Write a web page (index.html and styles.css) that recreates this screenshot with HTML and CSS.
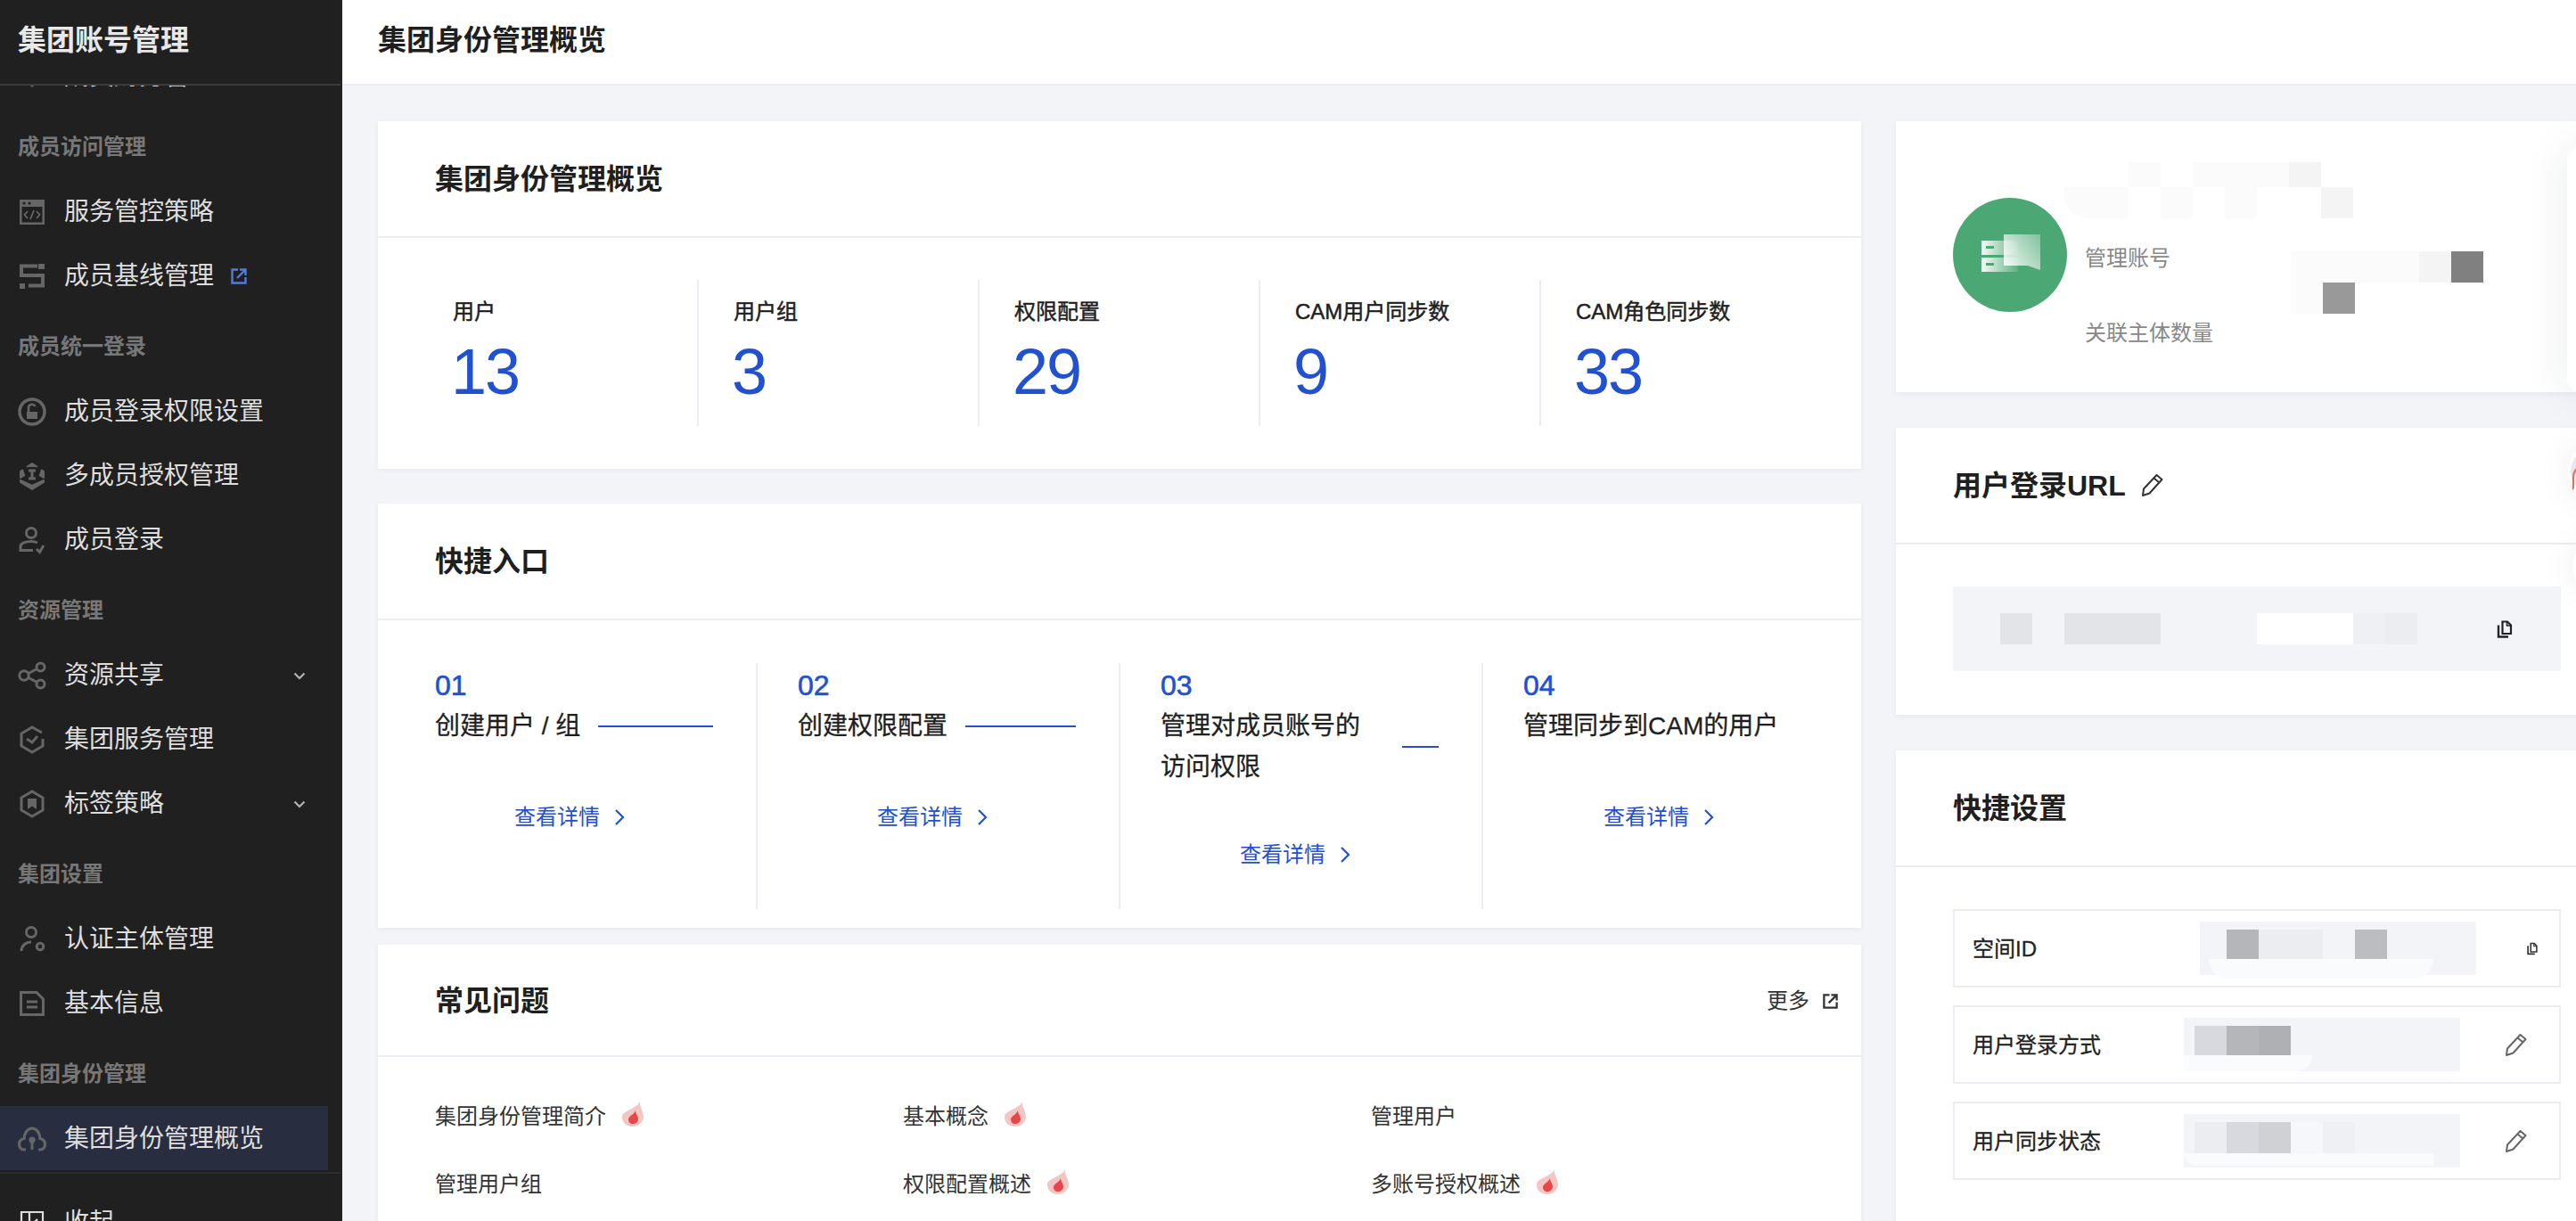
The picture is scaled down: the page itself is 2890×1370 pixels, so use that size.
FILE: index.html
```html
<!DOCTYPE html>
<html lang="zh-CN">
<head>
    <meta charset="UTF-8">
    <title>集团身份管理概览</title>
    <link rel="stylesheet" href="styles.css">
</head>
<body>
<svg class="defs" width="0" height="0">
    <defs>
        <symbol id="pencil" viewBox="0 0 27 27">
            <path d="M3 25 L4 17.500 L18.500 2 L24.500 7 L10.500 22.500 Z M15.500 5.500 L21.500 10.500" fill="none" stroke="currentColor" stroke-width="2" stroke-linejoin="round"/>
        </symbol>
        <symbol id="copy" viewBox="0 0 20 20">
            <path d="M7.5 1.5 H13 L17 5.5 V15 H7.5 Z" fill="none" stroke="currentColor" stroke-width="2.2"/>
            <path d="M12.5 1.5 V6 H17" fill="none" stroke="currentColor" stroke-width="1.6"/>
            <path d="M3 5.5 V18.5 H14" fill="none" stroke="currentColor" stroke-width="2.4"/>
        </symbol>
        <symbol id="chev-right" viewBox="0 0 12 20">
            <path d="M2 2 L10 10 L2 18" fill="none" stroke="currentColor" stroke-width="2.2"/>
        </symbol>
        <symbol id="chev-down" viewBox="0 0 14 9">
            <path d="M1.5 1.5 L7 7 L12.5 1.5" fill="none" stroke="currentColor" stroke-width="2.2"/>
        </symbol>
        <symbol id="flame" viewBox="0 0 24 28">
            <path d="M20 0 C19 6 24 10 24 18 C23 24 18 28 12 28 C5 28 0 24 0 17 C0 10 17 8 20 0 Z" fill="#f3c6c4"/>
            <path d="M15 10 C15 14 18 16 18 19.500 C18 23 15 25 12 25 C9 25 7 23 7 20 C7 16.500 13 15 15 10 Z" fill="#e5474a"/>
        </symbol>
        <symbol id="ext" viewBox="0 0 20 20">
            <path d="M9 2.5 H2.5 V17.5 H17.5 V11" fill="none" stroke="currentColor" stroke-width="2.4"/>
            <path d="M8 12 L17 3 M11 2.5 H17.5 V9" fill="none" stroke="currentColor" stroke-width="2.4"/>
        </symbol>
        <linearGradient id="fade-row" x1="0" x2="1" y1="0" y2="0">
            <stop offset="0" stop-color="#fff" stop-opacity="0.95"/>
            <stop offset="1" stop-color="#fff" stop-opacity="0.1"/>
        </linearGradient>
        <linearGradient id="fade-bubble" x1="0" x2="1" y1="0.7" y2="0">
            <stop offset="0" stop-color="#fff" stop-opacity="0.85"/>
            <stop offset="1" stop-color="#fff" stop-opacity="0.3"/>
        </linearGradient>
    </defs>
</svg>

<aside class="sidebar">
    <div class="side-head">集团账号管理</div>
    <nav class="side-list">
        <div class="nav-item">
            <span class="nav-icon"><svg width="28" height="28" viewBox="0 0 28 28"><path d="M3 16 L14 23 L25 16 L14 26 Z" fill="#666"/></svg></span>
            <span>成员财务管理</span>
        </div>

        <div class="nav-section">成员访问管理</div>
        <div class="nav-item">
            <span class="nav-icon"><svg width="28" height="28" viewBox="0 0 28 28"><path d="M0 0 H28 V28 H0 Z M2.5 8 V25.5 H25.5 V8 Z" fill="#666"/><circle cx="5" cy="4" r="1.6" fill="#202020"/><circle cx="11" cy="4" r="1.6" fill="#202020"/><path d="M9 13 L5.5 17 L9 21 M19 13 L22.5 17 L19 21 M16 12 L12 22" fill="none" stroke="#666" stroke-width="1.8"/></svg></span>
            <span>服务管控策略</span>
        </div>
        <div class="nav-item">
            <span class="nav-icon"><svg width="28" height="28" viewBox="0 0 28 28"><path d="M20 2.5 H2 V13 H26 V24.5 H10" fill="none" stroke="#666" stroke-width="4"/><rect x="21" y="0" width="7" height="6" fill="#666"/><rect x="0" y="22" width="6" height="6" fill="#666"/></svg></span>
            <span>成员基线管理</span>
            <svg class="nav-ext" width="20" height="20"><use href="#ext"/></svg>
        </div>

        <div class="nav-section">成员统一登录</div>
        <div class="nav-item">
            <span class="nav-icon"><svg width="32" height="32" viewBox="0 0 32 32"><circle cx="16" cy="16" r="14" fill="none" stroke="#666" stroke-width="3.5"/><rect x="10" y="16" width="12" height="8" fill="#666"/><path d="M12 16 V11 A4 4 0 0 1 19.5 10" fill="none" stroke="#666" stroke-width="2.6"/></svg></span>
            <span>成员登录权限设置</span>
        </div>
        <div class="nav-item">
            <span class="nav-icon"><svg width="28" height="32" viewBox="0 0 28 32"><path d="M8 6 L14 2 L20 6 M24 9 L27 11 V18 L22 15 M4 9 L1 11 V18 L6 15 M1 21 V23 L14 31 L27 23 V21 L14 27 Z" fill="#666" stroke="#666" stroke-width="2" stroke-linejoin="round"/><path d="M10 10 H18 M14 10 V19 M10 19 H18" fill="none" stroke="#666" stroke-width="3"/></svg></span>
            <span>多成员授权管理</span>
        </div>
        <div class="nav-item">
            <span class="nav-icon"><svg width="32" height="32" viewBox="0 0 32 32"><circle cx="15" cy="8" r="5.5" fill="none" stroke="#666" stroke-width="3"/><path d="M3 29 V23 C3 20 8 17.5 15 17.5 C18 17.5 20 18 22 19 M3 27.5 H17" fill="none" stroke="#666" stroke-width="3"/><path d="M21 26 L24.5 29.5 L29 22" fill="none" stroke="#666" stroke-width="3"/></svg></span>
            <span>成员登录</span>
        </div>

        <div class="nav-section">资源管理</div>
        <div class="nav-item">
            <span class="nav-icon"><svg width="32" height="32" viewBox="0 0 32 32"><g fill="none" stroke="#666" stroke-width="3"><circle cx="7" cy="16" r="5.2"/><circle cx="25.5" cy="6.5" r="4.5"/><circle cx="25.5" cy="25.5" r="4.5"/><path d="M12 13.5 L21.5 8.5 M12 18.5 L21.5 23.5"/></g></svg></span>
            <span>资源共享</span>
            <svg class="nav-chev" width="14" height="9"><use href="#chev-down"/></svg>
        </div>
        <div class="nav-item">
            <span class="nav-icon"><svg width="28" height="32" viewBox="0 0 28 32"><path d="M25 8 L14 2 L2 9 V23 L14 30 L26 23 V15" fill="none" stroke="#666" stroke-width="3"/><path d="M8 15 L14 19 L20 12" fill="none" stroke="#666" stroke-width="3"/></svg></span>
            <span>集团服务管理</span>
        </div>
        <div class="nav-item">
            <span class="nav-icon"><svg width="28" height="32" viewBox="0 0 28 32"><path d="M14 2 L26 9 V23 L14 30 L2 23 V9 Z" fill="none" stroke="#666" stroke-width="3"/><path d="M9 10 H19 V22 L14 18.5 L9 22 Z" fill="#666"/></svg></span>
            <span>标签策略</span>
            <svg class="nav-chev" width="14" height="9"><use href="#chev-down"/></svg>
        </div>

        <div class="nav-section">集团设置</div>
        <div class="nav-item">
            <span class="nav-icon"><svg width="32" height="32" viewBox="0 0 32 32"><g fill="none" stroke="#666" stroke-width="3"><circle cx="15" cy="8" r="5.5"/><path d="M4 29 C4 23 9 19 15 19"/><circle cx="25" cy="24" r="3.8"/></g></svg></span>
            <span>认证主体管理</span>
        </div>
        <div class="nav-item">
            <span class="nav-icon"><svg width="28" height="28" viewBox="0 0 28 28"><path d="M1.5 1.5 H19 L26.5 9 V26.5 H1.5 Z" fill="none" stroke="#666" stroke-width="3"/><path d="M8 12 H20 M8 18 H20" fill="none" stroke="#666" stroke-width="3"/></svg></span>
            <span>基本信息</span>
        </div>

        <div class="nav-section">集团身份管理</div>
        <div class="nav-item nav-active">
            <span class="nav-icon"><svg width="32" height="28" viewBox="0 0 32 28"><path d="M9 26 H7 C3.5 26 1.5 23 1.5 20 C1.5 16 4.5 14 7 13.5 C7.5 7 11 2 16 2 C21 2 24.5 7 25 13.5 C27.500 14 30.5 16 30.5 20 C30.500 23 28.5 26 25 26 H23" fill="none" stroke="#666" stroke-width="3.2"/><circle cx="16" cy="15" r="3.6" fill="#666"/><rect x="14.500" y="16" width="3" height="10" fill="#666"/></svg></span>
            <span>集团身份管理概览</span>
        </div>
    </nav>
    <div class="side-foot">
        <div class="nav-item">
            <span class="nav-icon"><svg width="28" height="28" viewBox="0 0 28 28"><path d="M2 2 H26 V26 H2 Z M11 2 V26 M20 10 L16 14 L20 18" fill="none" stroke="#ddd" stroke-width="2.2"/></svg></span>
            <span>收起</span>
        </div>
    </div>
</aside>

<main class="main">
    <header class="topbar">集团身份管理概览</header>
    <div class="content">
        <div class="col-left">
            <section class="card card-stats">
                <div class="card-head">集团身份管理概览</div>
                <div class="stats">
                    <div class="stat"><div class="stat-label">用户</div><div class="stat-num">13</div></div>
                    <div class="stat"><div class="stat-label">用户组</div><div class="stat-num">3</div></div>
                    <div class="stat"><div class="stat-label">权限配置</div><div class="stat-num">29</div></div>
                    <div class="stat"><div class="stat-label">CAM用户同步数</div><div class="stat-num">9</div></div>
                    <div class="stat"><div class="stat-label">CAM角色同步数</div><div class="stat-num">33</div></div>
                </div>
            </section>

            <section class="card card-entry">
                <div class="card-head">快捷入口</div>
                <div class="entries">
                    <div class="entry">
                        <div class="entry-no">01</div>
                        <div class="entry-title"><span>创建用户 / 组</span><i class="entry-line"></i></div>
                        <a class="entry-link">查看详情<svg width="12" height="20"><use href="#chev-right"/></svg></a>
                    </div>
                    <div class="entry">
                        <div class="entry-no">02</div>
                        <div class="entry-title"><span>创建权限配置</span><i class="entry-line"></i></div>
                        <a class="entry-link">查看详情<svg width="12" height="20"><use href="#chev-right"/></svg></a>
                    </div>
                    <div class="entry entry-wrap">
                        <div class="entry-no">03</div>
                        <div class="entry-title"><span>管理对成员账号的<br>访问权限</span><i class="entry-line"></i></div>
                        <a class="entry-link">查看详情<svg width="12" height="20"><use href="#chev-right"/></svg></a>
                    </div>
                    <div class="entry">
                        <div class="entry-no">04</div>
                        <div class="entry-title"><span>管理同步到CAM的用户</span></div>
                        <a class="entry-link">查看详情<svg width="12" height="20"><use href="#chev-right"/></svg></a>
                    </div>
                </div>
            </section>

            <section class="card card-faq">
                <div class="card-head card-head-faq">
                    <span>常见问题</span>
                    <a class="more">更多<svg width="19" height="19"><use href="#ext"/></svg></a>
                </div>
                <div class="faq">
                    <div class="faq-item">集团身份管理简介<svg width="24" height="28"><use href="#flame"/></svg></div>
                    <div class="faq-item">基本概念<svg width="24" height="28"><use href="#flame"/></svg></div>
                    <div class="faq-item">管理用户</div>
                    <div class="faq-item">管理用户组</div>
                    <div class="faq-item">权限配置概述<svg width="24" height="28"><use href="#flame"/></svg></div>
                    <div class="faq-item">多账号授权概述<svg width="24" height="28"><use href="#flame"/></svg></div>
                </div>
            </section>
        </div>

        <div class="col-right">
            <section class="card card-account">
                <div class="avatar">
                    <svg width="128" height="128" viewBox="0 0 128 128">
                        <circle cx="64" cy="64" r="64" fill="#4ba874"/>
                        <rect x="32" y="48" width="41" height="16" fill="url(#fade-row)"/>
                        <rect x="32" y="67" width="41" height="16" fill="url(#fade-row)"/>
                        <rect x="37" y="54" width="9" height="3" fill="#4ba874"/>
                        <rect x="37" y="73" width="9" height="3" fill="#4ba874"/>
                        <path d="M57 41 H98 V81 L84 76 H57 Z" fill="url(#fade-bubble)"/>
                    </svg>
                </div>
                <div class="account-text">
                    <div>管理账号</div>
                    <div>关联主体数量</div>
                </div>
                <div class="mosaic-stack mosaic-name">
                    <div class="mosaic mosaic-top"><i class="cell"></i><i class="cell"></i><i class="cell c-fb"></i><i class="cell"></i><i class="cell c-fb"></i><i class="cell c-fb"></i><i class="cell c-fb"></i><i class="cell c-f4"></i></div>
                    <div class="mosaic"><i class="cell c-fb cell-round"></i><i class="cell c-fb"></i><i class="cell"></i><i class="cell c-fb"></i><i class="cell"></i><i class="cell c-fb"></i><i class="cell"></i><i class="cell"></i><i class="cell c-f4"></i></div>
                </div>
                <div class="mosaic-stack mosaic-account">
                    <div class="mosaic"><i class="cell c-fb"></i><i class="cell c-fb"></i><i class="cell c-fb"></i><i class="cell c-fb"></i><i class="cell c-f4"></i><i class="cell c-80"></i></div>
                    <div class="mosaic"><i class="cell c-fb"></i><i class="cell c-99"></i></div>
                </div>
            </section>

            <section class="card card-url">
                <div class="card-head">用户登录URL<svg class="head-edit" width="27" height="27"><use href="#pencil"/></svg></div>
                <div class="url-body">
                    <div class="url-box">
                        <div class="mosaic">
                            <i class="cell c-e3"></i><i class="cell"></i><i class="cell c-e3"></i><i class="cell c-e3"></i><i class="cell c-e3"></i><i class="cell"></i><i class="cell"></i><i class="cell"></i><i class="cell c-ff"></i><i class="cell c-ff"></i><i class="cell c-ff"></i><i class="cell c-f0"></i><i class="cell c-ec"></i>
                        </div>
                        <svg class="url-copy" width="20" height="20"><use href="#copy"/></svg>
                    </div>
                </div>
            </section>

            <section class="card card-setting">
                <div class="card-head">快捷设置</div>
                <div class="settings">
                    <div class="set-row">
                        <div class="set-label set-label-wide">空间ID</div>
                        <div class="set-value">
                            <div class="mosaic"><i class="cell cell-half"></i><i class="cell c-b5"></i><i class="cell c-ec"></i><i class="cell c-ec"></i><i class="cell"></i><i class="cell c-bc"></i></div>
                            <i class="patch patch-a"></i>
                        </div>
                        <svg class="set-copy" width="14" height="15"><use href="#copy"/></svg>
                    </div>
                    <div class="set-row">
                        <div class="set-label">用户登录方式</div>
                        <div class="set-value">
                            <div class="mosaic"><i class="cell cell-third"></i><i class="cell c-d8"></i><i class="cell c-b5"></i><i class="cell c-af"></i></div>
                            <i class="patch patch-b"></i>
                        </div>
                        <svg class="set-edit" width="27" height="27"><use href="#pencil"/></svg>
                    </div>
                    <div class="set-row">
                        <div class="set-label">用户同步状态</div>
                        <div class="set-value">
                            <div class="mosaic"><i class="cell cell-third"></i><i class="cell c-ec"></i><i class="cell c-d8"></i><i class="cell c-d0"></i><i class="cell c-f6"></i><i class="cell c-f0"></i></div>
                            <i class="patch patch-c"></i>
                        </div>
                        <svg class="set-edit" width="27" height="27"><use href="#pencil"/></svg>
                    </div>
                </div>
            </section>
        </div>
    </div>
</main>

<!-- 右侧悬浮工具，被窗口裁掉大半 -->
<div class="float-panel"></div>
<div class="float-avatar"><i></i></div>
<div class="float-dot"></div>
</body>
</html>
```

FILE: styles.css
```css
* {
    box-sizing: border-box;
}
html, body {
    margin: 0;
    height: 100%;
}
body {
    width: 2890px;
    height: 1370px;
    display: flex;
    position: relative;
    overflow: hidden;
    font-family: "Liberation Sans", "Noto Sans CJK SC", sans-serif;
    color: #1f1f1f;
    background: #f2f4f8;
}
.defs {
    position: absolute;
}

/* sidebar */
.sidebar {
    width: 384px;
    height: 1370px;
    flex: none;
    display: flex;
    flex-direction: column;
    background: #202020;
    color: #dedede;
    border-right: 2px solid #232323;
}
.side-head {
    height: 96px;
    flex: none;
    padding-left: 20px;
    font-size: 32px;
    font-weight: 700;
    line-height: 90px;
    color: #e8e8e8;
    background: #202020;
    border-bottom: 2px solid #3a3a3a;
    position: relative;
    z-index: 1;
}
.side-list {
    flex: 1;
    min-height: 0;
    overflow: hidden;
}
.side-list > :first-child {
    margin-top: -47px;
}
.nav-section {
    height: 80px;
    padding: 27px 0 0 20px;
    font-size: 24px;
    font-weight: 700;
    line-height: 34px;
    color: #777;
}
.nav-item {
    width: 368px;
    height: 72px;
    display: flex;
    align-items: center;
    padding: 2px 0 0 20px;
    font-size: 28px;
    line-height: 40px;
}
.nav-active {
    background: #282d3f;
}
.nav-icon {
    width: 32px;
    height: 32px;
    flex: none;
    margin-right: 20px;
    display: flex;
    align-items: center;
    justify-content: center;
}
.nav-ext {
    margin-left: 18px;
    color: #4f7ddb;
}
.nav-chev {
    margin-left: auto;
    margin-right: 25px;
    color: #b5b5b5;
}
.side-foot {
    height: 55px;
    flex: none;
    padding-top: 18px;
    border-top: 2px solid #2e2e2e;
    overflow: hidden;
}

/* main */
.main {
    flex: 1;
    min-width: 0;
    overflow: hidden;
}
.topbar {
    height: 96px;
    padding-left: 40px;
    font-size: 32px;
    font-weight: 700;
    line-height: 90px;
    background: #fff;
    border-bottom: 2px solid #ebedf2;
}
.content {
    display: grid;
    grid-template-columns: 1664px 811px;
    column-gap: 39px;
    padding: 40px 0 0 40px;
}
.col-left, .col-right {
    display: flex;
    flex-direction: column;
}
.card {
    background: #fff;
    box-shadow: 0 2px 6px rgba(54, 58, 80, 0.06);
}
.card-head {
    height: 131px;
    display: flex;
    align-items: center;
    padding-left: 64px;
    font-size: 32px;
    font-weight: 700;
    line-height: 44px;
    border-bottom: 2px solid #ebedf2;
}
.card-stats {
    margin-bottom: 39px;
}
.card-entry {
    margin-bottom: 19px;
}
.card-account, .card-url {
    margin-bottom: 40px;
}

/* stats */
.stats {
    display: grid;
    grid-template-columns: repeat(5, 315px);
    margin-left: 45px;
    padding: 47px 0 48px;
}
.stat {
    height: 164px;
    padding: 20px 0 0 39px;
    border-right: 2px solid #ebedf2;
}
.stat:last-child {
    border-right: none;
}
.stat-label {
    font-size: 24px;
    line-height: 32px;
    -webkit-text-stroke: 0.5px #1f1f1f;
}
.stat-num {
    margin: 15px 0 0 -2px;
    font-size: 72px;
    line-height: 72px;
    letter-spacing: -2px;
    color: #2151d1;
}

/* quick entry */
.entries {
    display: grid;
    grid-template-columns: repeat(4, 407px);
    margin-left: 19px;
    padding: 48px 0 21px;
}
.entry {
    height: 276px;
    padding: 9px 48px 0 45px;
    border-right: 2px solid #ebedf2;
}
.entry:last-child {
    border-right: none;
}
.entry-no {
    font-size: 32px;
    line-height: 32px;
    color: #2151d1;
    -webkit-text-stroke: 0.6px #2151d1;
}
.entry-title {
    display: flex;
    align-items: center;
    margin-top: 7px;
    font-size: 28px;
    line-height: 46px;
    white-space: nowrap;
    -webkit-text-stroke: 0.3px #1f1f1f;
}
.entry-line {
    flex: 1;
    height: 2px;
    margin-left: 20px;
    background: #2151d1;
}
.entry-wrap .entry-title span {
    flex: 0 0 251px;
}
.entry-link {
    display: flex;
    align-items: center;
    justify-content: center;
    gap: 16px;
    margin-top: 62px;
    padding-right: 10px;
    font-size: 24px;
    line-height: 34px;
    color: #2151d1;
}
.entry-wrap .entry-link {
    margin-top: 58px;
}

/* faq */
.card-head-faq {
    height: 126px;
    justify-content: space-between;
    padding-top: 2px;
    padding-right: 25px;
}
.more {
    display: flex;
    align-items: center;
    gap: 14px;
    font-size: 24px;
    font-weight: 400;
    color: #333;
}
.faq {
    display: grid;
    grid-template-columns: repeat(3, 525px);
    padding: 26px 0 40px 64px;
}
.faq-item {
    height: 76px;
    display: flex;
    align-items: center;
    gap: 18px;
    font-size: 24px;
    color: #333;
}

/* account card */
.card-account {
    height: 304px;
    display: flex;
    position: relative;
    padding-left: 64px;
}
.avatar {
    width: 128px;
    height: 128px;
    margin-top: 86px;
}
.account-text {
    margin-left: 20px;
    padding-top: 137px;
    font-size: 24px;
    line-height: 34px;
    color: #888;
}
.account-text div + div {
    margin-top: 50px;
}

/* 打码色块 */
.mosaic {
    display: flex;
    height: 35px;
}
.cell {
    width: 36px;
    flex: none;
}
.cell-half {
    width: 30px;
}
.cell-third {
    width: 12px;
}
.cell-round {
    border-radius: 0 0 0 26px;
}
.c-ff { background: #fff; }
.c-fb { background: #fbfbfb; }
.c-f6 { background: #f6f7fa; }
.c-f4 { background: #f4f4f4; }
.c-f0 { background: #eff0f4; }
.c-ec { background: #ecedf1; }
.c-e3 { background: #e3e4e8; }
.c-d8 { background: #d8d9de; }
.c-d0 { background: #d0d1d5; }
.c-bc { background: #bcbdc1; }
.c-b5 { background: #b5b6ba; }
.c-af { background: #afb0b4; }
.c-99 { background: #999; }
.c-80 { background: #808080; }
.mosaic-stack {
    position: absolute;
}
.mosaic-top {
    height: 28px;
}
.mosaic-name {
    left: 189px;
    top: 46px;
}
.mosaic-account {
    left: 443px;
    top: 146px;
}

/* url card */
.url-body {
    padding: 47px 65px 49px 64px;
}
.url-box {
    height: 95px;
    display: flex;
    align-items: center;
    padding: 0 53px;
    background: #f2f4f8;
}
.url-copy {
    margin-left: auto;
    color: #222;
}
.head-edit {
    margin-left: 16px;
    color: #333;
}

/* settings */
.card-setting {
    flex: 1;
}
.settings {
    display: flex;
    flex-direction: column;
    gap: 20px;
    padding: 47px 65px 40px 64px;
}
.set-row {
    height: 88px;
    display: flex;
    align-items: center;
    padding-left: 20px;
    border: 2px solid #ebedf2;
}
.set-label {
    width: 237px;
    flex: none;
    padding-bottom: 3px;
    font-size: 24px;
    color: #222;
    -webkit-text-stroke: 0.3px #222;
}
.set-label-wide {
    width: 255px;
}
.set-value {
    width: 310px;
    height: 60px;
    flex: none;
    position: relative;
    padding-top: 9px;
    background: #f2f4f8;
}
.patch {
    position: absolute;
    background: #fafbfd;
}
.patch-a {
    left: 10px;
    top: 42px;
    width: 252px;
    height: 22px;
    border-radius: 0 0 40px 40px;
}
.patch-b {
    left: 0;
    top: 42px;
    width: 144px;
    height: 18px;
    border-radius: 0 0 30px 0;
}
.patch-c {
    left: 0;
    top: 44px;
    width: 280px;
    height: 14px;
    border-radius: 0 0 0 20px;
}
.set-copy {
    margin-left: auto;
    margin-right: 23px;
    color: #333;
}
.set-edit {
    margin-left: auto;
    margin-right: 35px;
    color: #666;
}

/* floating tools on the right edge */
.float-panel {
    position: absolute;
    left: 2880px;
    top: 165px;
    width: 40px;
    height: 275px;
    background: #fff;
    border-radius: 16px;
    box-shadow: 0 0 50px rgba(30, 40, 70, 0.1);
}
.float-avatar {
    position: absolute;
    left: 2881px;
    top: 499px;
    width: 60px;
    height: 60px;
    padding: 3px;
    background: #fff;
    border-radius: 50%;
    box-shadow: 0 0 40px rgba(30, 40, 70, 0.08);
}
.float-avatar i {
    display: block;
    width: 54px;
    height: 54px;
    position: relative;
    background: #e6e7f3;
    border-radius: 50%;
}
.float-avatar i::after {
    content: "";
    position: absolute;
    left: 2px;
    top: 20px;
    width: 18px;
    height: 24px;
    border: 2px solid transparent;
    border-left-color: #cf7a5c;
    border-top-color: #cf7a5c;
    border-radius: 50% 0 0 0;
}
.float-dot {
    position: absolute;
    left: 2886px;
    top: 610px;
    width: 50px;
    height: 50px;
    background: #fff;
    border-radius: 50%;
    box-shadow: 0 0 40px rgba(30, 40, 70, 0.08);
}
```
